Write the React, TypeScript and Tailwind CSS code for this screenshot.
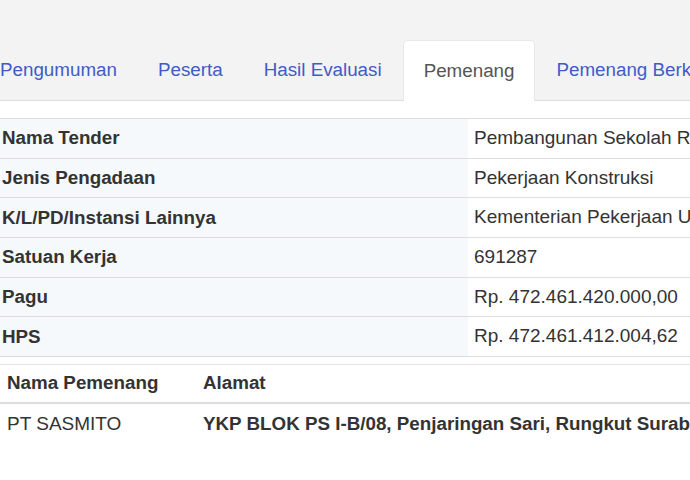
import React from 'react';

const tabs = ['Pengumuman', 'Peserta', 'Hasil Evaluasi', 'Pemenang', 'Pemenang Berkontrak'];

const details: [string, string][] = [
  ['Nama Tender', 'Pembangunan Sekolah Rakyat Kabupaten Bojonegoro'],
  ['Jenis Pengadaan', 'Pekerjaan Konstruksi'],
  ['K/L/PD/Instansi Lainnya', 'Kementerian Pekerjaan Umum'],
  ['Satuan Kerja', '691287'],
  ['Pagu', 'Rp. 472.461.420.000,00'],
  ['HPS', 'Rp. 472.461.412.004,62'],
];

export default function App() {
  const activeTab = 'Pemenang';

  return (
    <div className="w-[690px] h-[480px] overflow-hidden bg-white font-['Liberation_Sans',Arial,sans-serif] text-[19px] text-[#333]">
      <div className="bg-[#f3f3f3] pt-[40px]">
        <ul className="flex h-[61px] -ml-[20px] border-b border-[#dddddd] whitespace-nowrap text-[18.8px]">
          {tabs.map((tab) => (
            <li
              key={tab}
              className={
                tab === activeTab
                  ? 'flex items-center h-[61px] px-[20px] mr-[1px] bg-white text-[#555] rounded-t-[5px] border border-b-0 border-[#e8e8e8]'
                  : 'flex items-center h-[60px] px-[20px] mr-[1px] text-[#3f5bc8]'
              }
            >
              {tab}
            </li>
          ))}
        </ul>
      </div>

      <div className="pt-[17px] -ml-[5px] w-[1000px]">
        <div className="border-b border-[#dddddd]">
          {details.map(([label, value]) => (
            <div key={label} className="flex h-[39.67px] border-t border-[#dddddd] whitespace-nowrap">
              <div className="w-[473px] shrink-0 flex items-center pl-[7px] bg-[#f5f9fc] font-bold text-[18.8px]">
                {label}
              </div>
              <div className="flex items-center pl-[6px]">{value}</div>
            </div>
          ))}
        </div>

        <div className="mt-[7px] border-t border-[#e6e6e6] whitespace-nowrap">
          <div className="flex h-[39px] border-b-2 border-[#dddddd] font-bold text-[18.8px]">
            <div className="w-[201px] shrink-0 flex items-center pl-[12px]">Nama Pemenang</div>
            <div className="flex items-center pl-[7px]">Alamat</div>
          </div>
          <div className="flex h-[40px]">
            <div className="w-[201px] shrink-0 flex items-center pl-[12px]">PT SASMITO</div>
            <div className="flex items-center pl-[7px] font-bold text-[18.8px]">
              YKP BLOK PS I-B/08, Penjaringan Sari, Rungkut Surabaya
            </div>
          </div>
        </div>
      </div>
    </div>
  );
}
